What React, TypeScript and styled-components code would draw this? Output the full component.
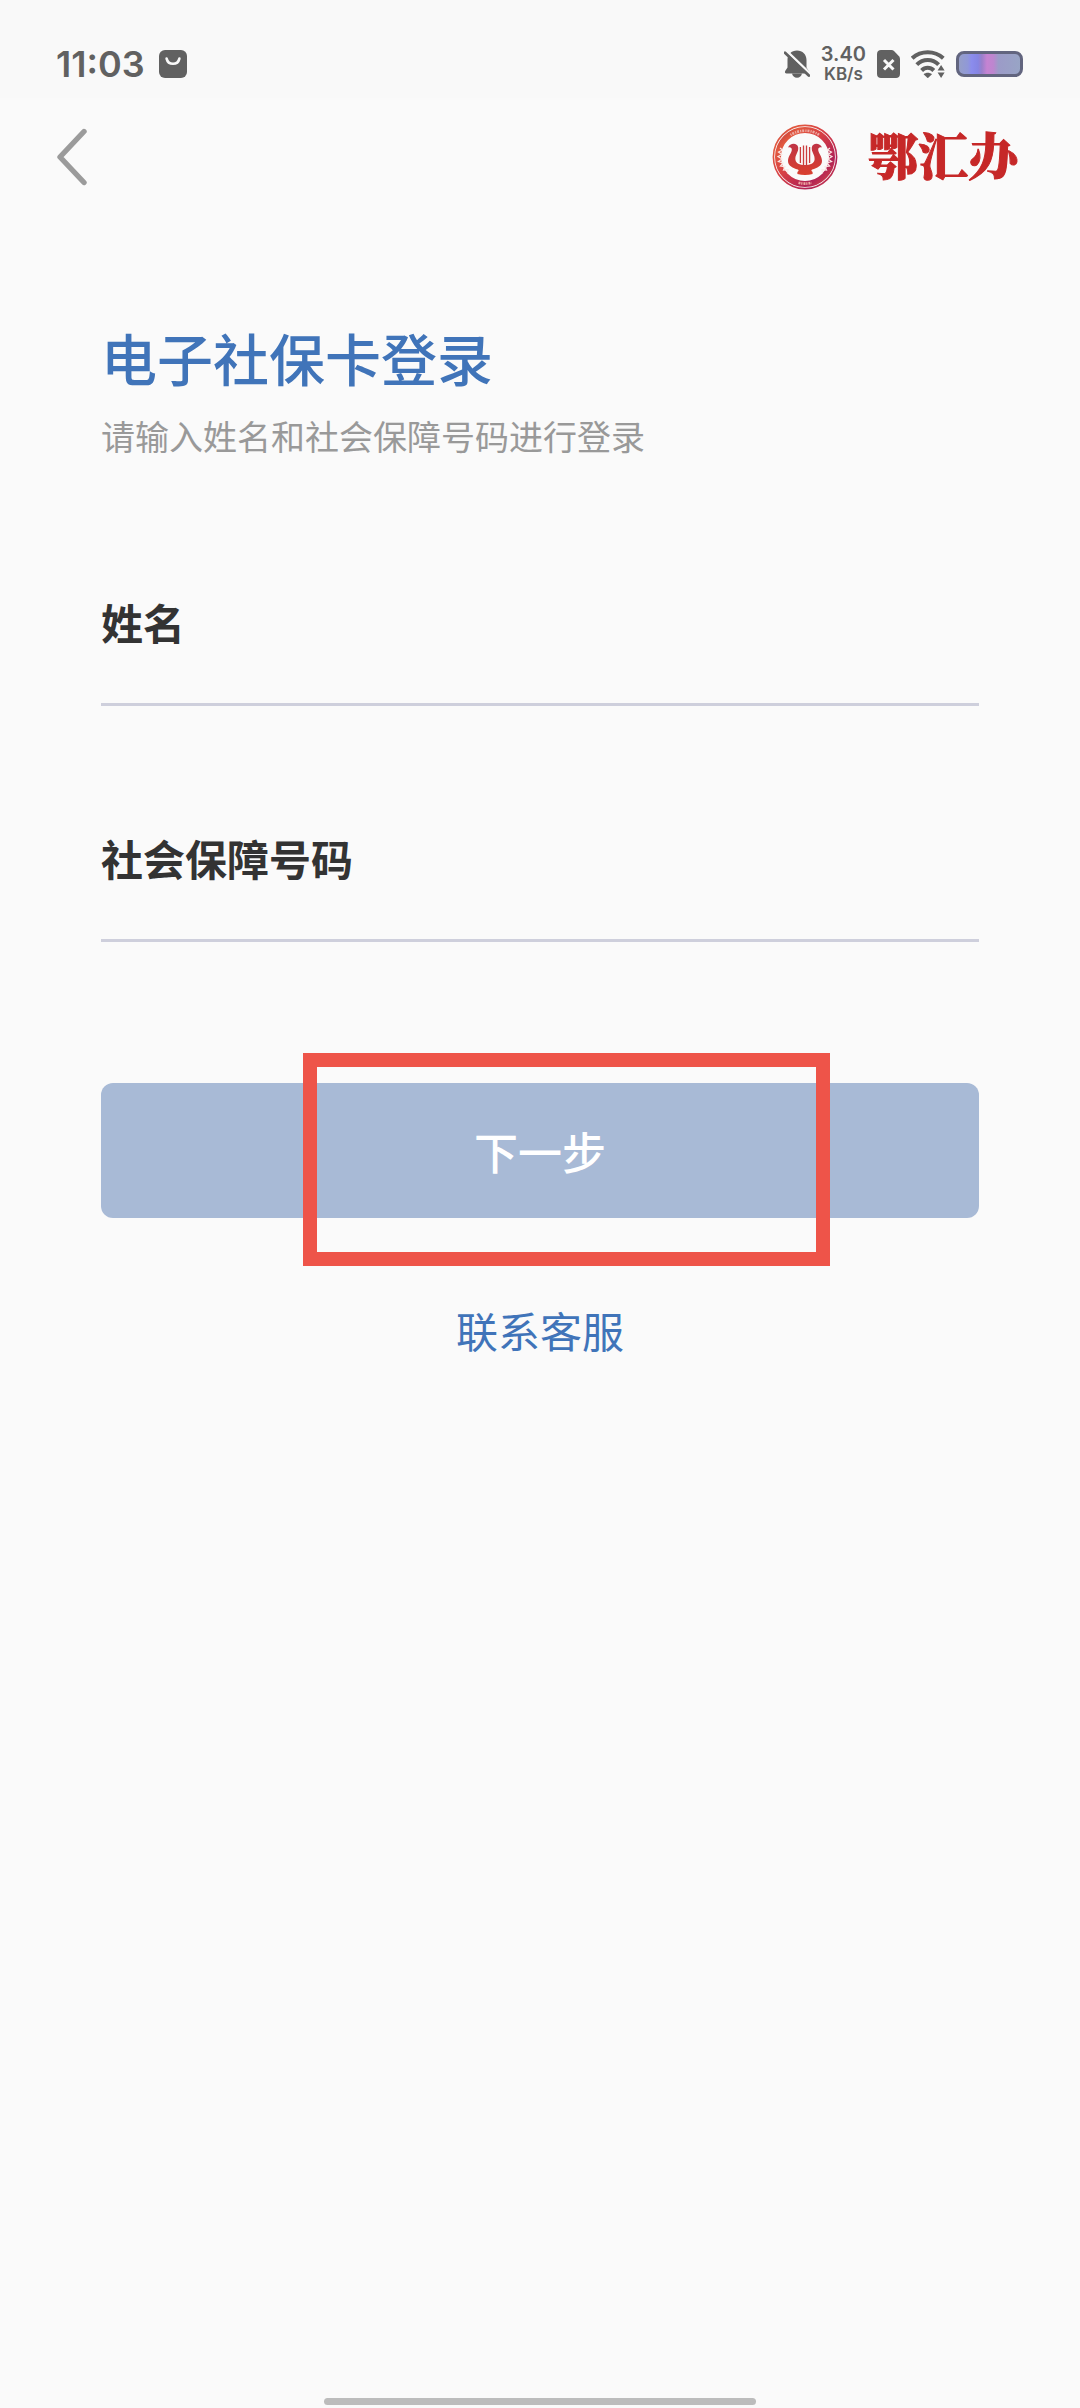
import React, { useState } from "react";
import styled, { createGlobalStyle, ThemeProvider } from "styled-components";

const theme = {
  fontFamily: `"Noto Sans CJK SC", "Noto Sans", sans-serif`,
  statusFontFamily: `Inter, "Noto Sans", sans-serif`,
  brandFontFamily: `"Noto Serif CJK SC", "Noto Sans CJK SC", serif`,
  background: "#fafafa",
  statusBackground: "#f9f9f9",
  status: "#616161",
  primary: "#4074b9",
  disabled: "#a8bad6",
  text: "#333333",
  muted: "#999999",
  line: "#cecfdc",
  brand: "#c62828",
  highlight: "#ee5449"
};

const FIELDS = [
  { id: "name", label: "姓名" },
  { id: "socialNumber", label: "社会保障号码" }
];

const GlobalStyle = createGlobalStyle`
  *, *::before, *::after {
    box-sizing: border-box;
  }
  body {
    margin: 0;
    background-color: #fafafa;
  }
`;

const Page = styled.div`
  display: flex;
  flex-direction: column;
  min-height: 100vh;
  font-family: ${props => props.theme.fontFamily};
  background-color: ${props => props.theme.background};
`;

const StatusBar = styled.div`
  display: flex;
  justify-content: space-between;
  align-items: center;
  height: 98px;
  padding: 30px 57px 0 56px;
  font-family: ${props => props.theme.statusFontFamily};
  font-weight: 600;
  color: ${props => props.theme.status};
  background-color: ${props => props.theme.statusBackground};
`;

const StatusGroup = styled.div<{ gap: number }>`
  display: flex;
  align-items: center;
  gap: ${props => props.gap}px;
`;

const Time = styled.time`
  font-size: 36px;
  line-height: 40px;
`;

const Speed = styled.div`
  display: flex;
  flex-direction: column;
  align-items: center;
  font-size: 20px;
  line-height: 20px;
`;

const SpeedUnit = styled.span`
  font-size: 17px;
`;

const Header = styled.header`
  display: flex;
  justify-content: space-between;
  align-items: center;
  height: 118px;
  padding: 0 62px 0 48px;
`;

const BackButton = styled.button`
  display: flex;
  padding: 8px;
  border: none;
  background: none;
  cursor: pointer;
`;

const Brand = styled.div`
  display: flex;
  align-items: center;
  gap: 30px;
`;

const BrandName = styled.span`
  padding-bottom: 8px;
  font-family: ${props => props.theme.brandFontFamily};
  font-size: 50px;
  font-weight: 900;
  line-height: 64px;
  color: ${props => props.theme.brand};
  -webkit-text-stroke: 1px ${props => props.theme.brand};
`;

const Main = styled.main`
  display: flex;
  flex: 1;
  flex-direction: column;
  padding: 101px 101px 0 101px;
`;

const Title = styled.h1`
  margin: 0;
  font-size: 56px;
  font-weight: 500;
  line-height: 80px;
  color: ${props => props.theme.primary};
`;

const Subtitle = styled.p`
  margin: 15px 0 0 0;
  font-size: 34px;
  line-height: 48px;
  color: ${props => props.theme.muted};
`;

const Form = styled.form`
  display: flex;
  flex-direction: column;
  gap: 124px;
  margin-top: 134px;
`;

const Field = styled.div`
  display: flex;
  flex-direction: column;
`;

const Label = styled.label`
  font-size: 42px;
  font-weight: 700;
  line-height: 56px;
  color: ${props => props.theme.text};
`;

const Input = styled.input`
  width: 100%;
  height: 56px;
  padding: 0;
  border: none;
  border-bottom: 3px solid ${props => props.theme.line};
  border-radius: 0;
  outline: none;
  font-family: inherit;
  font-size: 34px;
  color: ${props => props.theme.text};
  background: none;
`;

const SubmitWrapper = styled.div`
  position: relative;
  margin-top: 17px;
`;

const SubmitButton = styled.button`
  display: block;
  width: 100%;
  height: 135px;
  border: none;
  border-radius: 12px;
  font-family: inherit;
  font-size: 44px;
  font-weight: 500;
  color: #ffffff;
  background-color: ${props => props.theme.disabled};
  cursor: pointer;
`;

const Highlight = styled.div`
  position: absolute;
  top: -30px;
  bottom: -48px;
  left: 23%;
  width: 60%;
  border: 14px solid ${props => props.theme.highlight};
  pointer-events: none;
`;

const SupportLink = styled.a`
  align-self: center;
  margin-top: 82px;
  font-size: 42px;
  line-height: 60px;
  text-decoration: none;
  color: ${props => props.theme.primary};
`;

const HomeIndicator = styled.div`
  align-self: center;
  width: 40%;
  height: 7px;
  margin-bottom: 3px;
  border-radius: 4px;
  background-color: #bcbcbc;
`;

const AppIcon = () => (
  <svg width="28" height="28" viewBox="0 0 28 28" aria-hidden="true">
    <rect width="28" height="28" rx="6" fill="#616161" />
    <path
      d="M7.6 8.6c.8 3.4 3.2 5.2 6.4 5.2s5.600-1.800 6.400-5.200"
      fill="none"
      stroke="#f9f9f9"
      strokeWidth="2.600"
      strokeLinecap="round"
    />
  </svg>
);

const MutedIcon = () => (
  <svg width="26" height="28" viewBox="0 0 26 28" aria-hidden="true">
    <path
      d="M13 .5C7.400.5 3.500 4.500 3.500 10v7.500L1.200 21c-.7 1.200 0 2.500 1.300 2.500h21c1.300 0 2-1.300 1.300-2.500l-2.300-3.500V10C22.500 4.500 18.600.5 13 .5z"
      fill="#616161"
    />
    <path d="M8 23.500h10c-.5 2.600-2.300 4.300-5 4.300s-4.500-1.700-5-4.300z" fill="#616161" />
    <path d="M1 -.5L28 25.500" stroke="#f9f9f9" strokeWidth="2.600" />
    <path d="M1 2.800L24.800 25.500" stroke="#616161" strokeWidth="2.800" strokeLinecap="round" />
  </svg>
);

const SimIcon = () => (
  <svg width="23" height="28" viewBox="0 0 23 28" aria-hidden="true">
    <path
      d="M4 0h10.500c1 0 1.800.4 2.500 1.100l5 5.200c.6.7 1 1.500 1 2.500V24c0 2.400-1.600 4-4 4H4c-2.400 0-4-1.600-4-4V4c0-2.400 1.600-4 4-4z"
      fill="#616161"
    />
    <path d="M7 10l9.500 9.500M16.500 10L7 19.500" stroke="#f9f9f9" strokeWidth="3" />
  </svg>
);

const WifiIcon = () => (
  <svg width="34" height="28" viewBox="0 0 34 28" aria-hidden="true">
    <g fill="none" stroke="#616161" strokeWidth="4">
      <path d="M1.200 8.200C10 .2 23.500 .2 32.300 8.200" />
      <path d="M5.800 14.700c6.200-6.200 15.600-6.200 21.800 0" />
      <path d="M10.600 20.500c3.600-3.600 8.600-3.600 12.200 0" />
    </g>
    <path d="M12.600 24.300c2.400-2 6-2 8.400 0L16.800 28.200z" fill="#616161" />
    <path d="M26.600 20.500l3.500-5.500 3.500 5.500zM26.600 22.500h7L30.100 28z" fill="#616161" />
  </svg>
);

const BatteryIcon = () => (
  <svg width="67" height="26" viewBox="0 0 67 26" aria-hidden="true">
    <defs>
      <linearGradient id="battery-fill">
        <stop offset="0" stopColor="#97a0c6" />
        <stop offset=".16" stopColor="#9098d8" />
        <stop offset=".22" stopColor="#8b8ced" />
        <stop offset=".32" stopColor="#8585e3" />
        <stop offset=".38" stopColor="#9a7fcb" />
        <stop offset=".46" stopColor="#c583d2" />
        <stop offset=".56" stopColor="#bd86cf" />
        <stop offset=".64" stopColor="#9c9bc8" />
        <stop offset="1" stopColor="#98a5c5" />
      </linearGradient>
    </defs>
    <rect
      x="1.500"
      y="1.500"
      width="64"
      height="23"
      rx="6.500"
      fill="url(#battery-fill)"
      stroke="#62657f"
      strokeWidth="3"
    />
  </svg>
);

const BackIcon = () => (
  <svg width="32" height="58" viewBox="0 0 32 58" aria-hidden="true">
    <path
      d="M28 3.500L4 29l24 25.500"
      fill="none"
      stroke="#9b9b9b"
      strokeWidth="5.400"
      strokeLinecap="round"
      strokeLinejoin="round"
    />
  </svg>
);

const Emblem = () => (
  <svg width="66" height="66" viewBox="0 0 66 66" aria-hidden="true">
    <defs>
      <linearGradient id="emblem-ring" x1="0" y1="0" x2="1" y2="1">
        <stop offset="0" stopColor="#b8323c" />
        <stop offset=".18" stopColor="#e2593f" />
        <stop offset=".45" stopColor="#d63f45" />
        <stop offset=".78" stopColor="#b02155" />
        <stop offset="1" stopColor="#d84a44" />
      </linearGradient>
      <linearGradient id="emblem-lyre" x1="0" y1="0" x2="0" y2="1">
        <stop offset="0" stopColor="#bf3345" />
        <stop offset="1" stopColor="#d9402f" />
      </linearGradient>
    </defs>
    <g fill="none">
      <circle cx="33" cy="33" r="31.600" stroke="url(#emblem-ring)" strokeWidth="1.600" />
      <circle cx="33" cy="33" r="27" stroke="url(#emblem-ring)" strokeWidth="6" />
      {/* lettering band, top and bottom */}
      <path
        d="M18.500 11a26.600 26.600 0 0 1 29 0"
        stroke="#eda9a2"
        strokeWidth="2.600"
        strokeDasharray="1.200 .9 2 1.100"
      />
      <path
        d="M26.500 58.800a26.600 26.600 0 0 0 13 0"
        stroke="#eda9a2"
        strokeWidth="2.600"
        strokeDasharray="2 .8 1.200 1"
      />
      {/* wheat ears on both sides */}
      <path
        d="M8 24l2.500 2-4 2 3.500 2.500-4 2 4 2.500-3.600 2.500 4.600 1.500-2.600 3 4.600.6-1.500 3.400 4.500-.3-.5 3.600"
        stroke="#fbe9e6"
        strokeWidth="1.200"
      />
      <path
        d="M58 24l-2.500 2 4 2-3.500 2.500 4 2-4 2.500 3.600 2.500-4.600 1.500 2.600 3-4.600.6 1.500 3.400-4.500-.3.500 3.600"
        stroke="#fbe9e6"
        strokeWidth="1.200"
      />
    </g>
    {/* lyre: two curved arms that meet in a bowl on a foot */}
    <path
      d="M16 23.500C18 18.500 25.500 18.500 26.200 23.500C26.800 28 22.800 31 23.400 35.500C23.900 39.500 27.500 41 33 41C38.500 41 42.100 39.500 42.600 35.500C43.200 31 39.200 28 39.800 23.500C40.500 18.500 48 18.500 50 23.500C47.600 22.900 46 23.800 46.200 26C46.600 29.500 50 32 50 37C50 42 45 44 40.200 45.500C39 46 39.200 47.200 40.600 48V50C36 51.300 30 51.300 25.400 50V48C26.800 47.200 27 46 25.800 45.500C21 44 16 42 16 37C16 32 19.400 29.500 19.800 26C20 23.800 18.400 22.900 16 23.500Z"
      fill="url(#emblem-lyre)"
    />
    <path
      d="M28.400 23V39M31.500 21.500V42M34.500 21.500V42M37.600 23V39"
      fill="none"
      stroke="#cc3d3d"
      strokeWidth="1.300"
    />
  </svg>
);

const App = () => {
  const [values, setValues] = useState<Record<string, string>>({
    name: "",
    socialNumber: ""
  });

  return (
    <ThemeProvider theme={theme}>
      <GlobalStyle />
      <Page>
        <StatusBar>
          <StatusGroup gap={14}>
            <Time>11:03</Time>
            <AppIcon />
          </StatusGroup>
          <StatusGroup gap={11}>
            <MutedIcon />
            <Speed>
              <span>3.40</span>
              <SpeedUnit>KB/s</SpeedUnit>
            </Speed>
            <SimIcon />
            <WifiIcon />
            <BatteryIcon />
          </StatusGroup>
        </StatusBar>
        <Header>
          <BackButton type="button" aria-label="返回">
            <BackIcon />
          </BackButton>
          <Brand>
            <Emblem />
            <BrandName>鄂汇办</BrandName>
          </Brand>
        </Header>
        <Main>
          <Title>电子社保卡登录</Title>
          <Subtitle>请输入姓名和社会保障号码进行登录</Subtitle>
          <Form onSubmit={e => e.preventDefault()}>
            {FIELDS.map(field => (
              <Field key={field.id}>
                <Label htmlFor={field.id}>{field.label}</Label>
                <Input
                  id={field.id}
                  type="text"
                  value={values[field.id]}
                  onChange={e =>
                    setValues({ ...values, [field.id]: e.target.value })
                  }
                />
              </Field>
            ))}
            <SubmitWrapper>
              <SubmitButton type="submit">下一步</SubmitButton>
              <Highlight />
            </SubmitWrapper>
          </Form>
          <SupportLink href="#support">联系客服</SupportLink>
        </Main>
        <HomeIndicator />
      </Page>
    </ThemeProvider>
  );
};

export default App;
